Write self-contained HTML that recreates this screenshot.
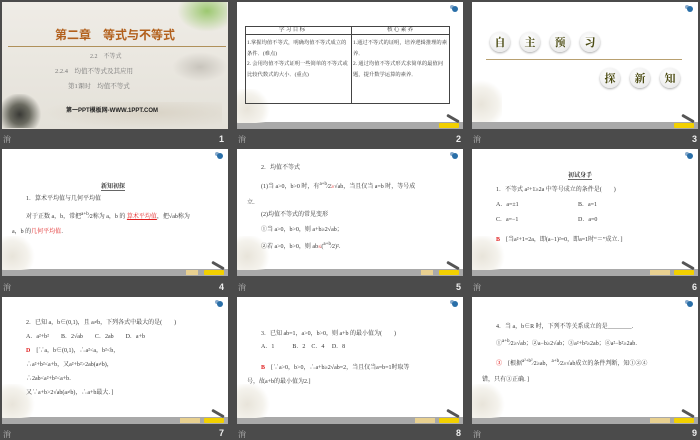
<!DOCTYPE html>
<html><head><meta charset="utf-8"><style>
*{margin:0;padding:0;box-sizing:border-box}
body{width:700px;height:438px;background:#4b4b4b;position:relative;overflow:hidden;font-family:"Liberation Serif","Noto Serif CJK SC",serif;color:#222}
.s{position:absolute;width:226px;height:127px;background:#fff;overflow:hidden}
.bar{position:absolute;left:0;right:0;bottom:0;height:7px;background:#a9a9a9}
.y{position:absolute;bottom:1px;right:4px;width:20px;height:5px;background:#f2d000;border-radius:1px}
.g{position:absolute;bottom:1px;right:28px;width:20px;height:5px;background:#e8d090}
.ic{position:absolute;top:4px;right:5px;width:6px;height:6px;border-radius:50%;background:#2a6fa8;box-shadow:-3px -2px 0 -1px #8ac}
.pen{position:absolute;right:3px;bottom:9px;width:14px;height:3px;background:#555;transform:rotate(30deg);border-radius:2px}
.fl{position:absolute;left:0;bottom:6px;width:34px;height:34px;background:radial-gradient(circle at 30% 60%,#e8e4da 0,#f4f2ec 50%,rgba(255,255,255,0) 72%)}
.num{position:absolute;color:#eee;font-size:9px;font-family:"Liberation Sans",sans-serif;font-weight:bold}
.ft{position:absolute;color:#bbb;font-size:8px}
.t{position:absolute;font-size:6px;white-space:nowrap;line-height:1;color:#333}
.r{color:#e02020}
.circ{position:absolute;width:20px;height:20px;border-radius:50%;background:radial-gradient(circle at 40% 35%,#fff,#e4e4e4);box-shadow:0 1px 2px #aaa;text-align:center;font:bold 11px/20px "Noto Serif CJK SC",serif;color:#4a4a10}
</style></head><body>

<div class="s" style="left:2px;top:2px;background:linear-gradient(#efece6,#e4e1d9)">
 <div style="position:absolute;left:40px;top:100px;width:180px;height:27px;background:radial-gradient(ellipse at 60% 40%,#d9d3c6,rgba(0,0,0,0) 70%)"></div>
 <div style="position:absolute;left:0;top:92px;width:44px;height:34px;background:radial-gradient(circle at 40% 60%,#3a3a36 0,#6a6a60 30%,rgba(0,0,0,0) 65%)"></div>
 <div style="position:absolute;left:175px;top:0;width:50px;height:30px;background:radial-gradient(ellipse at 60% 30%,#9cc870,rgba(0,0,0,0) 70%)"></div>
 <div style="position:absolute;left:170px;top:50px;width:56px;height:30px;background:radial-gradient(ellipse,#c8c4bc,rgba(0,0,0,0) 70%)"></div>
 <div class="t" style="left:53px;top:27px;font-size:12px;font-weight:bold;color:#b2601c;font-family:'Noto Sans CJK SC',sans-serif">第二章　等式与不等式</div>
 <div style="position:absolute;left:6px;top:44px;width:218px;height:1px;background:#b0905a"></div>
 <div class="t" style="left:88px;top:52px;color:#777">2.2　不等式</div>
 <div class="t" style="left:53px;top:67px;color:#777;font-size:6.5px">2.2.4　均值不等式及其应用</div>
 <div class="t" style="left:66px;top:82px;color:#777;font-size:6.5px">第1课时　均值不等式</div>
 <div class="t" style="left:64px;top:106px;font-weight:bold;font-family:'Liberation Sans','Noto Sans CJK SC',sans-serif;color:#222">第一PPT模板网-WWW.1PPT.COM</div>
</div>
<div class="ft" style="left:3px;top:134px">㳙</div><div class="num" style="left:219px;top:134px">1</div>

<div class="s" style="left:237px;top:2px">
 <div class="ic"></div><div class="bar"><div class="y"></div></div><div class="pen"></div><div class="fl"></div>
 <div style="position:absolute;left:8px;top:24px;width:107px;height:78px;border:1px solid #444"></div>
 <div style="position:absolute;left:114px;top:24px;width:99px;height:78px;border:1px solid #444"></div>
 <div style="position:absolute;left:8px;top:32px;width:205px;height:1px;background:#444"></div>
 <div class="t" style="left:42px;top:26px;font-size:5.5px">学 习 目 标</div>
 <div class="t" style="left:150px;top:26px;font-size:5.5px">核 心 素 养</div>
 <div class="t" style="left:10px;top:36px;font-size:5.3px;line-height:10.5px;white-space:normal;width:104px">1.掌握均值不等式，明确均值不等式成立的条件．(难点)<br>2. 会用均值不等式证明一些简单的不等式或比较代数式的大小．(重点)</div>
 <div class="t" style="left:116px;top:36px;font-size:5.3px;line-height:10.5px;white-space:normal;width:96px">1.通过不等式的证明，培养逻辑推理的素养．<br>2. 通过均值不等式形式求简单的最值问题，提升数学运算的素养．</div>
</div>
<div class="ft" style="left:238px;top:134px">㳙</div><div class="num" style="left:456px;top:134px">2</div>

<div class="s" style="left:472px;top:2px">
 <div class="ic"></div><div class="bar"><div class="y"></div></div><div class="pen"></div><div class="fl" style="width:30px;height:44px;bottom:7px"></div>
 <div class="circ" style="left:18px;top:30px">自</div><div class="circ" style="left:48px;top:30px">主</div><div class="circ" style="left:78px;top:30px">预</div><div class="circ" style="left:108px;top:30px">习</div>
 <div style="position:absolute;left:14px;top:57px;width:196px;height:1px;background:#b8a070"></div>
 <div class="circ" style="left:128px;top:66px">探</div><div class="circ" style="left:158px;top:66px">新</div><div class="circ" style="left:188px;top:66px">知</div>
</div>
<div class="ft" style="left:473px;top:134px">㳙</div><div class="num" style="left:692px;top:134px">3</div>

<div class="s" style="left:2px;top:149px">
 <div class="ic"></div><div class="bar"><div class="g" style="right:30px;width:12px"></div><div class="y"></div></div><div class="pen"></div><div class="fl"></div>
 <div class="t" style="left:99px;top:35px;font-weight:bold;border-bottom:1px solid #666">新知初探</div>
 <div class="t" style="left:24px;top:47px">1．算术平均值与几何平均值</div>
 <div class="t" style="left:24px;top:63px">对于正数 a，b，常把<sup>a+b</sup>⁄2称为 a，b 的 <span class="r" style="text-decoration:underline">算术平均值</span>，把√ab称为</div>
 <div class="t" style="left:10px;top:80px">a，b 的<span class="r">几何平均值</span>．</div>
</div>
<div class="ft" style="left:3px;top:282px">㳙</div><div class="num" style="left:219px;top:282px">4</div>

<div class="s" style="left:237px;top:149px">
 <div class="ic"></div><div class="bar"><div class="g" style="right:30px;width:12px"></div><div class="y"></div></div><div class="pen"></div><div class="fl"></div>
 <div class="t" style="left:24px;top:16px">2．均值不等式</div>
 <div class="t" style="left:24px;top:33px">(1)当 a&gt;0，b&gt;0 时，有<sup>a+b</sup>⁄2<span class="r">≥</span>√ab，当且仅当 a=b 时，等号成</div>
 <div class="t" style="left:10px;top:51px">立．</div>
 <div class="t" style="left:24px;top:63px">(2)均值不等式的常见变形</div>
 <div class="t" style="left:24px;top:78px">①当 a&gt;0，b&gt;0，则 a+b≥2√ab；</div>
 <div class="t" style="left:24px;top:93px">②若 a&gt;0，b&gt;0，则 ab<span class="r">≤</span>(<sup>a+b</sup>⁄2)²．</div>
</div>
<div class="ft" style="left:238px;top:282px">㳙</div><div class="num" style="left:456px;top:282px">5</div>

<div class="s" style="left:472px;top:149px">
 <div class="ic"></div><div class="bar"><div class="g"></div><div class="y"></div></div><div class="pen"></div><div class="fl"></div>
 <div class="t" style="left:96px;top:24px;font-weight:bold;border-bottom:1px solid #666">初试身手</div>
 <div class="t" style="left:24px;top:38px">1．不等式 a²+1≥2a 中等号成立的条件是(　　)</div>
 <div class="t" style="left:24px;top:53px">A．a=±1</div><div class="t" style="left:106px;top:53px">B．a=1</div>
 <div class="t" style="left:24px;top:68px">C．a=−1</div><div class="t" style="left:106px;top:68px">D．a=0</div>
 <div class="t" style="left:24px;top:88px"><b class="r">B</b>　[当a²+1=2a，即(a−1)²=0，即a=1时“＝”成立．]</div>
</div>
<div class="ft" style="left:473px;top:282px">㳙</div><div class="num" style="left:692px;top:282px">6</div>

<div class="s" style="left:2px;top:297px">
 <div class="ic"></div><div class="bar"><div class="g"></div><div class="y"></div></div><div class="pen"></div><div class="fl"></div>
 <div class="t" style="left:24px;top:23px">2．已知 a，b∈(0,1)，且 a≠b，下列各式中最大的是(　　)</div>
 <div class="t" style="left:24px;top:37px">A．a²+b²　　B．2√ab　　C．2ab　　D．a+b</div>
 <div class="t" style="left:24px;top:51px"><b class="r">D</b>　[∵a，b∈(0,1)，∴a²&lt;a，b²&lt;b，</div>
 <div class="t" style="left:24px;top:65px">∴a²+b²&lt;a+b，又a²+b²&gt;2ab(a≠b)，</div>
 <div class="t" style="left:24px;top:79px">∴2ab&lt;a²+b²&lt;a+b．</div>
 <div class="t" style="left:24px;top:93px">又∵a+b&gt;2√ab(a≠b)，∴a+b最大．]</div>
</div>
<div class="ft" style="left:3px;top:429px">㳙</div><div class="num" style="left:219px;top:428px">7</div>

<div class="s" style="left:237px;top:297px">
 <div class="ic"></div><div class="bar"><div class="g"></div><div class="y"></div></div><div class="pen"></div><div class="fl"></div>
 <div class="t" style="left:24px;top:34px">3．已知 ab=1，a&gt;0，b&gt;0，则 a+b 的最小值为(　　)</div>
 <div class="t" style="left:24px;top:47px">A．1　　　B．2　C．4　 D．8</div>
 <div class="t" style="left:24px;top:68px"><b class="r">B</b>　[∵a&gt;0，b&gt;0，∴a+b≥2√ab=2，当且仅当a=b=1时取等</div>
 <div class="t" style="left:10px;top:82px">号，故a+b的最小值为2.]</div>
</div>
<div class="ft" style="left:238px;top:429px">㳙</div><div class="num" style="left:456px;top:428px">8</div>

<div class="s" style="left:472px;top:297px">
 <div class="ic"></div><div class="bar"><div class="g"></div><div class="y"></div></div><div class="pen"></div><div class="fl"></div>
 <div class="t" style="left:24px;top:27px">4．当 a，b∈R 时，下列不等关系成立的是________．</div>
 <div class="t" style="left:24px;top:42px">①<sup>a+b</sup>⁄2≥√ab；②a−b≥2√ab；③a²+b²≥2ab；④a²−b²≥2ab．</div>
 <div class="t" style="left:24px;top:62px"><b class="r">③</b>　[根据<sup>a²+b²</sup>⁄2≥ab，<sup>a+b</sup>⁄2≥√ab成立的条件判断，知①②④</div>
 <div class="t" style="left:10px;top:80px">错，只有③正确．]</div>
</div>
<div class="ft" style="left:473px;top:429px">㳙</div><div class="num" style="left:692px;top:428px">9</div>

</body></html>
